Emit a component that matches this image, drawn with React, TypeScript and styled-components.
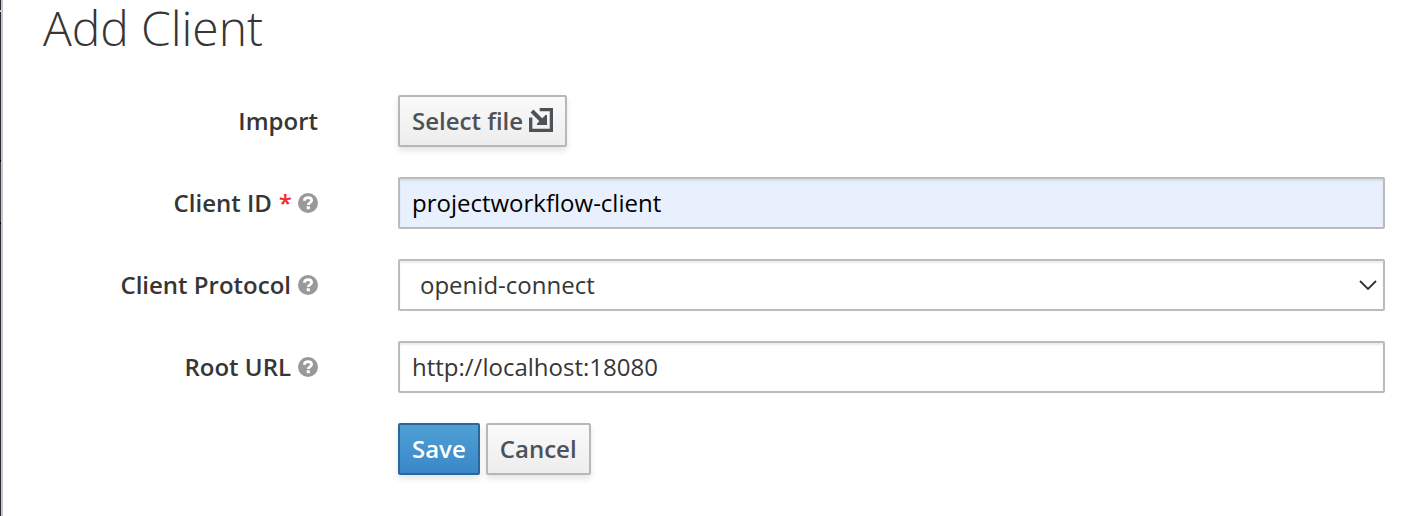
import React from "react";
import styled, { createGlobalStyle, css } from "styled-components";

const Global = createGlobalStyle`
  * { box-sizing: border-box; }
  body { margin: 0; background: #fff; font-family: "Open Sans", sans-serif; color: #363636; }
`;

const Shell = styled.div`
  display: flex;
  height: 516px;
`;

const NavEdge = styled.div`
  flex: 0 0 3px;
  border-right: 2px solid #c9c8cd;
  background: linear-gradient(
    #292e34 0 10px, #d1d1d1 10px 12px, #292e34 12px 160px, #030303 160px 162px,
    #393f44 162px 222px, #030303 222px 224px, #292e34 224px
  );
`;

const Page = styled.main`
  flex: 1;
  padding: 0 41px 0 38px;
`;

const Title = styled.h1`
  margin: 0 0 0 2px;
  height: 95px;
  font-size: 48px;
  line-height: 55px;
  font-weight: 300;
  letter-spacing: -0.08px;
`;

const Form = styled.form`
  display: flex;
  flex-direction: column;
  gap: 30px;
`;

const Row = styled.div`
  display: grid;
  grid-template-columns: 277px 1fr;
  column-gap: 80px;
  align-items: center;
  height: 52px;
`;

const Label = styled.label`
  display: flex;
  justify-content: flex-end;
  align-items: center;
  font-size: 24px;
  line-height: 40px;
  font-weight: 600;
  white-space: nowrap;
`;

const Required = styled.span`
  color: #f5281e;
  margin: 0 -1px 0 7px;
`;

const HelpIcon = styled.svg`
  width: 20px;
  height: 20px;
  margin-left: 7px;
`;

const FileIcon = styled.svg`
  width: 24px;
  height: 24px;
  margin-bottom: 2px;
`;

const field = css`
  width: 100%;
  height: 52px;
  border: 2px solid #bbb;
  border-radius: 2px;
  font: 400 24px/40px "Open Sans", sans-serif;
  box-shadow: inset 0 2px 2px rgba(3, 3, 3, 0.075);
  outline: none;
`;

const TextInput = styled.input<{ $filled?: boolean }>`
  ${field}
  padding: 0 12px 2px;
  color: ${(p) => (p.$filled ? "#000" : "#363636")};
  background: ${(p) => (p.$filled ? "#e8f0fe" : "#fff")};
`;

const SelectBox = styled.div`
  ${field}
  display: flex;
  align-items: center;
  justify-content: space-between;
  padding: 0 6px 0 20px;
`;

const Actions = styled.div`
  grid-column: 2;
  display: flex;
  gap: 6px;
`;

const Button = styled.button<{ $primary?: boolean }>`
  display: flex;
  align-items: center;
  gap: 6px;
  height: 52px;
  padding: 0 12px;
  border: 2px solid ${(p) => (p.$primary ? "#2b669a" : "#b7b7b7")};
  border-radius: 2px;
  background: ${(p) => (p.$primary ? "linear-gradient(#4fa0d5, #3a87c8)" : "linear-gradient(#fafafa, #ededed)")};
  color: ${(p) => (p.$primary ? "#fff" : "#4d5258")};
  font: 600 24px/40px "Open Sans", sans-serif;
  box-shadow: 0 4px 6px rgba(3, 3, 3, 0.1);
`;

const Help = () => (
  <HelpIcon viewBox="0 0 20 20">
    <circle cx="10" cy="10" r="10" fill="#999" />
    <path d="M6.200 7.700C6.700 5.500 8.100 4.600 10 4.600c2.100 0 3.600 1.100 3.600 2.900 0 2.300-3.300 2.300-3.300 4.400" fill="none" stroke="#fff" strokeWidth="2.800" />
    <path d="M8.700 13.300h3.200v2.900H8.700z" fill="#fff" />
  </HelpIcon>
);

const ImportIcon = () => (
  <FileIcon viewBox="0 0 24 24" fill="none" stroke="#4d5258">
    <path d="M10.700 1.500h11.700v20.900H1.700V9.500" strokeWidth="3.300" />
    <path d="M3 3l11 11" strokeWidth="4" />
    <path d="M8 17v-1.500L16.500 7H18v10z" fill="#4d5258" stroke="none" />
  </FileIcon>
);

export default function App() {
  return (
    <>
      <Global />
      <Shell>
        <NavEdge />
        <Page>
          <Title>Add Client</Title>
          <Form>
            <Row>
              <Label>Import</Label>
              <Actions>
                <Button type="button">
                  Select file
                  <ImportIcon />
                </Button>
              </Actions>
            </Row>
            <Row>
              <Label htmlFor="clientId">Client ID<Required>*</Required><Help /></Label>
              <TextInput id="clientId" $filled defaultValue="projectworkflow-client" />
            </Row>
            <Row>
              <Label>Client Protocol<Help /></Label>
              <SelectBox>
                openid-connect
                <svg width="18" height="12" viewBox="0 0 18 12" fill="none" stroke="#333" strokeWidth="1.800">
                  <path d="M1 2l8 8 8-8" />
                </svg>
              </SelectBox>
            </Row>
            <Row>
              <Label htmlFor="rootUrl">Root URL<Help /></Label>
              <TextInput id="rootUrl" defaultValue="http://localhost:18080" />
            </Row>
            <Row>
              <Actions>
                <Button type="submit" $primary>Save</Button>
                <Button type="button">Cancel</Button>
              </Actions>
            </Row>
          </Form>
        </Page>
      </Shell>
    </>
  );
}
